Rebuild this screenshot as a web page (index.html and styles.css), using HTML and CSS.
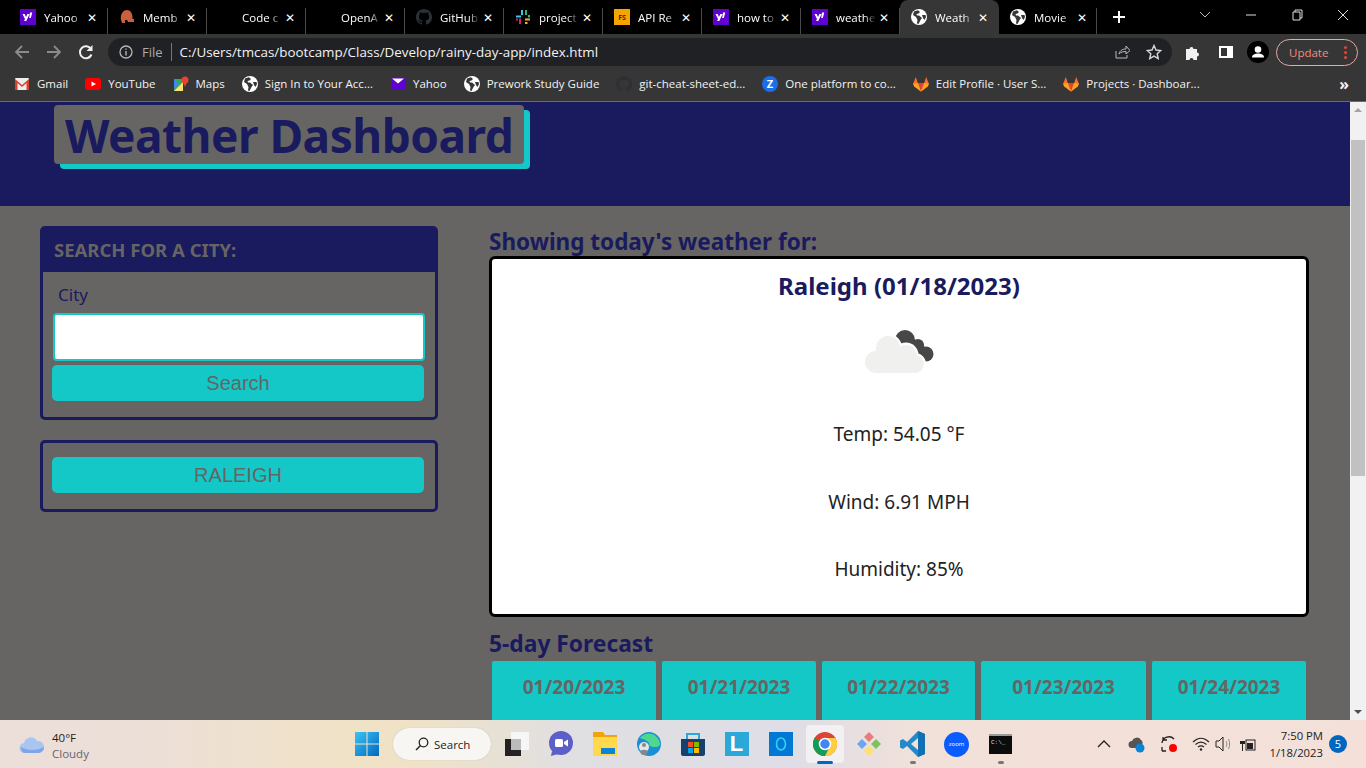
FILE: index.html
```html
<!DOCTYPE html>
<html lang="en">
<head>
    <meta charset="UTF-8">
    <meta name="viewport" content="width=device-width, initial-scale=1.0">
    <title>Weather Dashboard</title>
    <link rel="stylesheet" href="styles.css">
</head>
<body>
    <svg class="defs" width="0" height="0">
        <symbol id="globe" viewBox="0 0 16 16">
            <circle cx="8" cy="8" r="8" fill="#fff"/>
            <path d="M7 1.200 3 2.600 2 6l3 2 1.500 3-.5 3.500 1.500.5L9.500 11 11 9 8 6.500 6 6.500 5.500 5 7.500 4.500 9 3z" fill="#363636"/>
            <path d="M11 6h3.500l.5 2-1.500 3-1.500-2z" fill="#363636"/>
        </symbol>
        <symbol id="yahoo" viewBox="0 0 16 16">
            <rect width="16" height="16" fill="#5f01d1"/>
            <path d="M2.500 5h2.200L6 8l1.400-3h2.100L6.300 12H4.100l.9-2.100zM10 3.500h2.300L10.800 9H9.200z" fill="#fff"/>
        </symbol>
        <symbol id="github" viewBox="0 0 16 16">
            <path fill="#2b3137" d="M8 0C3.580 0 0 3.580 0 8c0 3.540 2.290 6.530 5.470 7.590.4.070.55-.17.55-.38 0-.19-.01-.82-.01-1.490-2.010.37-2.530-.49-2.690-.94-.09-.23-.48-.94-.82-1.130-.28-.15-.68-.52-.01-.53.63-.01 1.080.58 1.230.82.72 1.210 1.870.87 2.330.66.070-.52.28-.87.51-1.070-1.780-.2-3.640-.89-3.640-3.950 0-.87.31-1.590.82-2.150-.08-.2-.36-1.020.08-2.120 0 0 .67-.21 2.200.82.64-.18 1.320-.27 2-.27.68 0 1.360.09 2 .27 1.530-1.040 2.200-.82 2.200-.82.44 1.100.16 1.920.08 2.120.51.56.82 1.270.82 2.150 0 3.070-1.870 3.750-3.650 3.950.29.25.54.73.54 1.480 0 1.070-.01 1.930-.01 2.200 0 .21.15.46.55.38A8.013 8.013 0 0016 8c0-4.420-3.580-8-8-8z"/>
        </symbol>
        <symbol id="gitlab" viewBox="0 0 16 16">
            <path d="M8 15.500 1 10.200l-.8-2.700L2.800 1l2 6h6.400l2-6 2.600 6.500-.8 2.700z" fill="#fc6d26"/>
            <path d="M8 15.500 4.800 7h6.400z" fill="#e24329"/>
            <path d="M8 15.500 1 10.200l-.8-2.700L4.800 7zM8 15.500l7-5.300.8-2.700L11.200 7z" fill="#fca326"/>
        </symbol>
    </svg>

    <div class="tabstrip">
        <div class="tab"><svg class="favicon"><use href="#yahoo"/></svg><span class="tab-title">Yahoo</span><span class="tab-x">✕</span></div>
        <div class="tab"><svg class="favicon" viewBox="0 0 16 16"><path d="M2 11C1 4 5 1 8 1s6 3 5.500 9H15v3H9l-1-2H6v3H3z" fill="#c8603e"/></svg><span class="tab-title">Memb</span><span class="tab-x">✕</span></div>
        <div class="tab"><span class="favicon"></span><span class="tab-title">Code c</span><span class="tab-x">✕</span></div>
        <div class="tab"><span class="favicon"></span><span class="tab-title">OpenA</span><span class="tab-x">✕</span></div>
        <div class="tab"><svg class="favicon"><use href="#github"/></svg><span class="tab-title">GitHub</span><span class="tab-x">✕</span></div>
        <div class="tab"><svg class="favicon" viewBox="0 0 16 16"><path d="M1 6.500h5v2H1z" fill="#36c5f0"/><path d="M6 1h2v5H6z" fill="#36c5f0"/><path d="M10 1h2v5h-2zM13 6h2v2.500h-2z" fill="#2eb67d"/><path d="M10 9.500h5v2h-5zM10 13h2.500v2H10z" fill="#ecb22e"/><path d="M1 9.500h2v2H1zM4 9.500h2v5.500H4z" fill="#e01e5a"/></svg><span class="tab-title">project</span><span class="tab-x">✕</span></div>
        <div class="tab"><svg class="favicon" viewBox="0 0 16 16"><rect width="16" height="16" fill="#f5a400"/><text x="8" y="11" class="fs-mark">FS</text></svg><span class="tab-title">API Re</span><span class="tab-x">✕</span></div>
        <div class="tab"><svg class="favicon"><use href="#yahoo"/></svg><span class="tab-title">how to</span><span class="tab-x">✕</span></div>
        <div class="tab"><svg class="favicon"><use href="#yahoo"/></svg><span class="tab-title">weathe</span><span class="tab-x">✕</span></div>
        <div class="tab tab-active"><svg class="favicon"><use href="#globe"/></svg><span class="tab-title">Weath</span><span class="tab-x">✕</span></div>
        <div class="tab tab-last"><svg class="favicon"><use href="#globe"/></svg><span class="tab-title">Movie</span><span class="tab-x">✕</span></div>
        <svg class="new-tab" width="14" height="14" viewBox="0 0 14 14"><path d="M7 1v12M1 7h12" stroke="#fff" stroke-width="2"/></svg>
        <div class="window-btns">
            <svg width="46" height="14" viewBox="0 0 46 14"><path d="M18 4l5 5 5-5" fill="none" stroke="#bbb"/></svg>
            <svg width="46" height="14" viewBox="0 0 46 14"><path d="M18 7h10" stroke="#ddd"/></svg>
            <svg width="46" height="14" viewBox="0 0 46 14"><path d="M19 4h7v8h-7zM21 4V2h7v8h-2" fill="none" stroke="#ddd"/></svg>
            <svg width="46" height="14" viewBox="0 0 46 14"><path d="M18 2l10 10M28 2 18 12" stroke="#ddd"/></svg>
        </div>
    </div>

    <div class="toolbar">
        <svg class="nav-icon" viewBox="0 0 16 16"><path d="M15 8H2M8 2 2 8l6 6" fill="none" stroke="#8a8b8d" stroke-width="1.800"/></svg>
        <svg class="nav-icon" viewBox="0 0 16 16"><path d="M1 8h13M8 2l6 6-6 6" fill="none" stroke="#8a8b8d" stroke-width="1.800"/></svg>
        <svg class="nav-icon" viewBox="0 0 16 16"><path d="M13.500 10.500A6 6 0 1 1 13 5" fill="none" stroke="#f1f1f1" stroke-width="2"/><path d="M14.500 1v6h-6z" fill="#f1f1f1"/></svg>
        <div class="omnibox">
            <svg class="info-icon" viewBox="0 0 14 14"><circle cx="7" cy="7" r="6" fill="none" stroke="#b4b6b8" stroke-width="1.300"/><path d="M7 6v4.500M7 3.500v1.300" stroke="#b4b6b8" stroke-width="1.400"/></svg>
            <span class="scheme">File</span>
            <span class="url">C:/Users/tmcas/bootcamp/Class/Develop/rainy-day-app/index.html</span>
            <svg class="omni-icon" viewBox="0 0 16 16"><path d="M2 7v7h11v-3" fill="none" stroke="#b8babc"/><path d="M5 10c1-4 4-5 7-5V2l4 4.500L12 10V7.500C9 7.500 7 8 5 10z" fill="none" stroke="#b8babc"/></svg>
            <svg class="omni-icon star" viewBox="0 0 16 16"><path d="M8 1.500l2 4.500 4.800.5-3.600 3.200 1 4.800L8 12.100l-4.200 2.400 1-4.800L1.200 6.500 6 6z" fill="none" stroke="#d5d6d8" stroke-width="1.400"/></svg>
        </div>
        <svg class="tool-icon puzzle" viewBox="0 0 16 16"><path d="M1 5h3.500a2 2 0 1 1 4 0H12v3.500a2 2 0 1 1 0 4V16H8.500a2 2 0 1 0-4 0H1z" fill="#f1f1f1"/></svg>
        <svg class="tool-icon" viewBox="0 0 16 16"><path d="M1 2h14v12H1zM3 4v8h6V4z" fill="#fff" fill-rule="evenodd"/></svg>
        <svg class="avatar" viewBox="0 0 22 22"><circle cx="11" cy="11" r="11" fill="#000"/><circle cx="11" cy="8.500" r="3.300" fill="#fff"/><path d="M5 16.500c0-3 3-4 6-4s6 1 6 4z" fill="#fff"/></svg>
        <div class="update-pill"><span>Update</span><i class="kebab"></i></div>
    </div>

    <div class="bookmarks">
        <div class="bm"><svg class="bm-icon" viewBox="0 0 16 16"><rect x="1" y="2" width="14" height="12" rx="1" fill="#eee"/><path d="M1 3l7 6 7-6v11h-2.500V7L8 11 3.500 7v7H1z" fill="#d8402f"/></svg>Gmail</div>
        <div class="bm"><svg class="bm-icon" viewBox="0 0 16 16"><rect y="2" width="16" height="12" rx="3" fill="#f00"/><path d="M6.500 5.500v5L11 8z" fill="#fff"/></svg>YouTube</div>
        <div class="bm"><svg class="bm-icon" viewBox="0 0 16 16"><path d="M1 3h9v12H1z" fill="#34a853"/><path d="M1 15 10 6v9z" fill="#fbe26a"/><path d="M1 3l5 5-5 5z" fill="#4285f4"/><circle cx="12" cy="4" r="3.500" fill="#ea4335"/><path d="M10 6l2 5 2-5z" fill="#ea4335"/></svg>Maps</div>
        <div class="bm"><svg class="bm-icon"><use href="#globe"/></svg>Sign In to Your Acc...</div>
        <div class="bm"><svg class="bm-icon" viewBox="0 0 16 16"><path d="M1 2h14v12H1z" fill="#5f01d1"/><path d="M2 2.500h12L8 7.500z" fill="#fff"/></svg>Yahoo</div>
        <div class="bm"><svg class="bm-icon"><use href="#globe"/></svg>Prework Study Guide</div>
        <div class="bm"><svg class="bm-icon"><use href="#github"/></svg>git-cheat-sheet-ed...</div>
        <div class="bm"><svg class="bm-icon" viewBox="0 0 16 16"><circle cx="8" cy="8" r="8" fill="#1a6fe8"/><text x="8" y="12" class="z-mark">Z</text></svg>One platform to co...</div>
        <div class="bm"><svg class="bm-icon"><use href="#gitlab"/></svg>Edit Profile · User S...</div>
        <div class="bm"><svg class="bm-icon"><use href="#gitlab"/></svg>Projects · Dashboar...</div>
        <span class="bm-more">»</span>
    </div>

    <div class="viewport">
        <div class="page">
            <header class="banner">
                <h1 class="banner-title">Weather Dashboard</h1>
            </header>
            <div class="content">
                <aside class="sidebar">
                    <section class="panel">
                        <h2 class="panel-head">SEARCH FOR A CITY:</h2>
                        <label class="city-label" for="city">City</label>
                        <input class="city-input" type="text" id="city">
                        <button class="btn" type="button">Search</button>
                    </section>
                    <section class="panel history">
                        <button class="btn" type="button">RALEIGH</button>
                    </section>
                </aside>
                <main class="results">
                    <h3 class="section-title">Showing today's weather for:</h3>
                    <div class="today">
                        <h2 class="today-title">Raleigh (01/18/2023)</h2>
                        <svg class="today-icon" width="80" height="50" viewBox="-1 0 80 50">
                            <g fill="#474747">
                                <circle cx="45" cy="15" r="10"/>
                                <circle cx="58" cy="20" r="6"/>
                                <circle cx="66" cy="29" r="7.500"/>
                                <path d="M40 12 62 16 70 35 50 36z"/>
                            </g>
                            <g fill="#fff">
                                <circle cx="28" cy="23" r="14"/>
                                <circle cx="46" cy="30" r="12.500"/>
                                <circle cx="55" cy="39" r="11"/>
                            </g>
                            <g fill="#f0f0ef">
                                <circle cx="16" cy="37" r="11"/>
                                <circle cx="28" cy="23" r="12"/>
                                <circle cx="46" cy="31" r="11"/>
                                <circle cx="55" cy="39" r="9"/>
                                <path d="M16 30h39v18H16z"/>
                            </g>
                        </svg>
                        <p class="today-line first">Temp: 54.05 °F</p>
                        <p class="today-line">Wind: 6.91 MPH</p>
                        <p class="today-line">Humidity: 85%</p>
                    </div>
                    <h3 class="section-title forecast-title">5-day Forecast</h3>
                    <div class="forecast">
                        <div class="day">01/20/2023</div>
                        <div class="day">01/21/2023</div>
                        <div class="day">01/22/2023</div>
                        <div class="day">01/23/2023</div>
                        <div class="day">01/24/2023</div>
                    </div>
                </main>
            </div>
        </div>
        <div class="scrollbar">
            <svg class="scroll-arrow" width="16" height="16" viewBox="0 0 16 16"><path d="M4 10l4-4 4 4z" fill="#a3a3a3"/></svg>
            <div class="scroll-thumb"></div>
            <svg class="scroll-arrow bottom" width="16" height="16" viewBox="0 0 16 16"><path d="M4 6l4 4 4-4z" fill="#505050"/></svg>
        </div>
    </div>

    <footer class="taskbar">
        <div class="tb-weather">
            <svg width="26" height="20" viewBox="0 0 26 20"><path d="M6 19a5 5 0 0 1-1-10 7 7 0 0 1 13-2 6 6 0 0 1 2 12z" fill="#a9c5f2"/><path d="M2 13c6 4 16 4 23 0v2c-2 3-4 4-6 4H6c-2 0-4-2-4-6z" fill="#7fa5e6"/></svg>
            <div class="tb-weather-text"><span>40°F</span><span class="muted">Cloudy</span></div>
        </div>
        <svg class="win-logo" width="24" height="24" viewBox="0 0 24 24">
            <defs><linearGradient id="win" x1="0" y1="0" x2="1" y2="1"><stop offset="0" stop-color="#3bc4f4"/><stop offset="1" stop-color="#0067c0"/></linearGradient></defs>
            <path d="M0 0h11.500v11.500H0zM12.500 0H24v11.500H12.500zM0 12.500h11.500V24H0zM12.500 12.500H24V24H12.500z" fill="url(#win)"/>
        </svg>
        <div class="tb-search">
            <svg width="14" height="14" viewBox="0 0 14 14"><circle cx="8.500" cy="5.500" r="4.300" fill="none" stroke="#222" stroke-width="1.300"/><path d="M5.500 8.500 1 13" stroke="#222" stroke-width="1.500"/></svg>
            <span>Search</span>
        </div>
        <div class="tb-apps">
            <div class="slot"><svg width="24" height="24" viewBox="0 0 24 24"><rect x="6" y="0" width="18" height="18" fill="#f6f6f6"/><rect x="0" y="7" width="16" height="17" fill="#222"/><rect x="6" y="7" width="10" height="11" fill="#bbb"/></svg></div>
            <div class="slot"><svg width="24" height="26" viewBox="0 0 24 26"><circle cx="12" cy="12" r="12" fill="#5b5fc7"/><path d="M3 20l-1 5 7-2z" fill="#5b5fc7"/><rect x="6" y="8" width="8" height="8" rx="1.500" fill="#fff"/><path d="M15 11l4-2.500v7L15 13z" fill="#fff"/></svg></div>
            <div class="slot"><svg width="26" height="24" viewBox="0 0 26 24"><path d="M1 0h10l2 3h12v21H1z" fill="#f0a30a"/><path d="M1 5h24v19H1z" fill="#ffd84d"/><rect x="9" y="16" width="14" height="6" fill="#0a84d6"/></svg></div>
            <div class="slot"><svg width="24" height="24" viewBox="0 0 24 24"><circle cx="12" cy="12" r="12" fill="#1b8fd6"/><path d="M3 6c5-7 17-6 20 5 1 5-9 5-11 2 2-3-6-6-9-7z" fill="#4fd68f"/><circle cx="7" cy="15" r="5" fill="#e5e5e5"/><circle cx="7" cy="13" r="2" fill="#888"/><path d="M3 20c0-3 8-3 8 0l-2 3H5z" fill="#888"/></svg></div>
            <div class="slot"><svg width="24" height="24" viewBox="0 0 24 24"><path d="M0 7h24v15c0 1-1 2-2 2H2c-1 0-2-1-2-2z" fill="#17406d"/><path d="M6 7V2h12v5" fill="none" stroke="#2aa6e0" stroke-width="2"/><path d="M7 10h5v5H7z" fill="#f25022"/><path d="M13 10h5v5h-5z" fill="#7fba00"/><path d="M7 16h5v5H7z" fill="#00a4ef"/><path d="M13 16h5v5h-5z" fill="#ffb900"/></svg></div>
            <div class="slot"><div class="l-app">L</div></div>
            <div class="slot"><svg width="24" height="24" viewBox="0 0 24 24"><rect width="24" height="24" fill="#0078d4"/><ellipse cx="12" cy="12" rx="4.500" ry="6" fill="none" stroke="#34d1f5" stroke-width="1.600"/></svg></div>
            <div class="slot slot-on"><svg width="24" height="24" viewBox="0 0 24 24"><circle cx="12" cy="12" r="12" fill="#db4437"/><path d="M12 12 1.600 6A12 12 0 0 0 12 24l6-12z" fill="#0f9d58"/><path d="M12 24A12 12 0 0 0 22.400 6H12l6 6z" fill="#ffcd40"/><circle cx="12" cy="12" r="5.500" fill="#4285f4" stroke="#fff" stroke-width="1.500"/></svg><i class="run-bar"></i></div>
            <div class="slot"><svg width="24" height="24" viewBox="0 0 24 24"><path d="M12 0l5 5-5 5-5-5z" fill="#e87c7c"/><path d="M5 7l5 5-5 5-5-5z" fill="#6aa7f0"/><path d="M19 7l5 5-5 5-5-5z" fill="#7cc35b"/><path d="M12 14l5 5-5 5-5-5z" fill="#ffe16b"/></svg></div>
            <div class="slot"><svg width="25" height="26" viewBox="0 0 25 26"><path d="M18 0l7 3v20l-7 3L7 15l-4 3-3-1.500v-7L3 8l4 3z" fill="#2489ca"/><path d="M18 0l7 3v20l-7 3z" fill="#1070b3"/><path d="M18 7 11 13l7 6z" fill="#f3e0d8"/></svg><i class="run-dot"></i></div>
            <div class="slot"><div class="zoom-app">zoom</div></div>
            <div class="slot"><div class="cmd-app">C:\_</div><i class="run-dot"></i></div>
        </div>
        <div class="tray">
            <svg class="tray-i" width="14" height="8" viewBox="0 0 14 8"><path d="M1 7l6-6 6 6" fill="none" stroke="#222" stroke-width="1.300"/></svg>
            <svg class="tray-i gap-l" width="18" height="18" viewBox="0 0 18 18"><path d="M4 13a3.500 3.500 0 0 1 0-7 5 5 0 0 1 9-1 4 4 0 0 1 1 5H9v3z" fill="#555"/><circle cx="12" cy="13" r="4.500" fill="#0a84d6"/></svg>
            <svg class="tray-i gap-m" width="18" height="18" viewBox="0 0 18 18"><path d="M2 8a7 7 0 0 1 12-4M3 2v3h4M2 12v4M2 16h4" fill="none" stroke="#222" stroke-width="1.300"/><circle cx="13" cy="13" r="4" fill="#f00"/></svg>
            <svg class="tray-i gap-m" width="18" height="14" viewBox="0 0 18 14"><path d="M1 5c5-5 11-5 16 0M3.500 7.500c3.500-3 7.500-3 11 0M6 10c2-1.500 4-1.500 6 0" fill="none" stroke="#222" stroke-width="1.200"/><circle cx="9" cy="12.500" r="1.200" fill="#222"/></svg>
            <svg class="tray-i gap-s" width="16" height="16" viewBox="0 0 16 16"><path d="M1 5h3l4-4v14l-4-4H1z" fill="none" stroke="#222"/><path d="M11 5c1 2 1 4 0 6M13.500 3c1.500 3 1.500 7 0 10" fill="none" stroke="#888"/></svg>
            <svg class="tray-i gap-b" width="16" height="16" viewBox="0 0 16 16"><path d="M1 1v4M4 1v4M0 5h5v3H3v7H2V8H0z" fill="#222"/><rect x="6" y="4" width="9" height="10" fill="none" stroke="#222"/><rect x="7" y="7" width="6" height="6" fill="#222"/></svg>
            <div class="clock"><span>7:50 PM</span><span>1/18/2023</span></div>
            <div class="notif">5</div>
        </div>
    </footer>
</body>
</html>
```

FILE: styles.css
```css
* {
    box-sizing: border-box;
}
html, body {
    height: 100%;
}
body {
    margin: 0;
    height: 768px;
    overflow: hidden;
    display: flex;
    flex-direction: column;
    font-family: "Noto Sans", sans-serif;
    background-color: #000;
}
.defs {
    position: absolute;
}

/* browser chrome */
.tabstrip {
    height: 34px;
    flex: none;
    display: flex;
    padding-left: 9px;
    background-color: #000;
    color: #fff;
}
.tab {
    width: 99px;
    height: 34px;
    display: flex;
    align-items: center;
    padding-left: 11px;
    font-family: "Open Sans", sans-serif;
    font-size: 11.500px;
    position: relative;
    border-right: 1px solid #4a4a4a;
    background-clip: padding-box;
}
.tab::after {
    content: "";
    position: absolute;
    right: -1px;
    top: 0;
    width: 1px;
    height: 8px;
    background-color: #000;
}
.tab-active {
    background-color: #363636;
    border-right: none;
    border-radius: 8px 8px 0 0;
}
.tab-last {
    width: 98px;
}
.favicon {
    width: 16px;
    height: 16px;
    flex: none;
    display: block;
}
.tab-title {
    width: 40px;
    margin-left: 8px;
    overflow: hidden;
    white-space: nowrap;
    -webkit-mask-image: linear-gradient(to right, #000 70%, transparent 100%);
    mask-image: linear-gradient(to right, #000 70%, transparent 100%);
}
.tab-x {
    width: 16px;
    text-align: center;
    font-size: 12px;
}
.fs-mark {
    font-size: 7px;
    font-weight: bold;
    text-anchor: middle;
    fill: #4a2c00;
}
.z-mark {
    font-size: 11px;
    font-weight: bold;
    text-anchor: middle;
    fill: #fff;
}
.new-tab {
    align-self: center;
    margin-left: 15px;
}
.window-btns {
    margin-left: auto;
    display: flex;
    align-items: center;
    height: 30px;
}
.toolbar {
    height: 34px;
    flex: none;
    display: flex;
    align-items: center;
    padding: 2px 0 0 14px;
    background-color: #363636;
}
.nav-icon {
    width: 16px;
    height: 16px;
    margin-right: 16px;
    flex: none;
}
.omnibox {
    width: 1064px;
    height: 28px;
    margin-left: -2px;
    display: flex;
    align-items: center;
    padding-left: 11px;
    border-radius: 14px;
    background-color: #202124;
    font-family: "Open Sans", sans-serif;
    font-size: 13px;
    flex: none;
}
.info-icon {
    width: 14px;
    height: 14px;
    flex: none;
}
.scheme {
    margin-left: 9px;
    padding-right: 8px;
    border-right: 1px solid #70757a;
    color: #a9abad;
    line-height: 18px;
}
.url {
    margin-left: 8px;
    color: #f1f3f4;
    font-size: 13.400px;
    white-space: nowrap;
}
.omni-icon {
    width: 16px;
    height: 16px;
    margin-left: auto;
    margin-right: 16px;
    flex: none;
}
.omni-icon.star {
    margin-left: 0;
    margin-right: 10px;
}
.tool-icon {
    width: 16px;
    height: 16px;
    flex: none;
    margin-left: 17px;
}
.puzzle {
    margin-left: 13px;
}
.avatar {
    width: 22px;
    height: 22px;
    flex: none;
    margin-left: 13px;
}
.update-pill {
    width: 82px;
    height: 27px;
    margin-left: 7px;
    padding-left: 12px;
    flex: none;
    display: flex;
    align-items: center;
    border: 1px solid #e8a99f;
    border-radius: 14px;
    color: #f28b82;
    font-family: "Open Sans", sans-serif;
    font-size: 11.500px;
}
.kebab {
    width: 3px;
    height: 3px;
    margin-left: 16px;
    border-radius: 50%;
    background-color: #ea4335;
    box-shadow: 0 -5px 0 #ea4335, 0 5px 0 #ea4335;
}
.bookmarks {
    height: 34px;
    flex: none;
    display: flex;
    align-items: center;
    padding: 0 0 2px 14px;
    gap: 17px;
    background-color: #363636;
    border-bottom: 1px solid #6a6a6a;
    color: #f1f3f4;
    font-family: "Open Sans", sans-serif;
    font-size: 11.500px;
    white-space: nowrap;
}
.bm {
    display: flex;
    align-items: center;
    gap: 7px;
}
.bm-icon {
    width: 16px;
    height: 16px;
    flex: none;
}
.bm-more {
    margin-left: auto;
    margin-right: 17px;
    font-size: 16px;
    font-weight: bold;
}

/* page */
.viewport {
    flex: 1;
    min-height: 0;
    display: flex;
    background-color: #666563;
    overflow: hidden;
}
.page {
    flex: 1;
    min-width: 0;
}
.banner {
    height: 104px;
    padding: 3px 0 0 54px;
    background-color: #1a1a5e;
}
.banner-title {
    width: 470px;
    height: 59px;
    margin: 0;
    padding-left: 11px;
    background-color: #666563;
    border-radius: 4px;
    box-shadow: 6px 5px 0 #15c8c8;
    color: #1a1a5e;
    font-size: 46px;
    font-weight: 700;
    letter-spacing: -0.5px;
    line-height: 61px;
    white-space: nowrap;
}
.content {
    display: grid;
    grid-template-columns: 398px 820px;
    column-gap: 51px;
    padding: 20px 0 0 40px;
}
.panel {
    height: 194px;
    padding: 0 10px;
    border: 3px solid #1a1a5e;
    border-radius: 5px;
}
.panel-head {
    height: 43px;
    margin: 0 -10px;
    padding-left: 11px;
    background-color: #1a1a5e;
    color: #666563;
    font-size: 18.500px;
    font-weight: 700;
    line-height: 42px;
}
.city-label {
    display: block;
    height: 41px;
    padding-left: 5px;
    color: #1a1a5e;
    font-size: 17px;
    line-height: 46px;
}
.city-input {
    display: block;
    width: 372px;
    height: 48px;
    border: 2px solid #15c8c8;
    border-radius: 4px;
    background-color: #fff;
}
.btn {
    display: block;
    width: 372px;
    height: 36px;
    margin: 4px 0 0 -1px;
    padding: 0;
    border: none;
    border-radius: 5px;
    background-color: #15c8c8;
    color: #666563;
    font-family: "Liberation Sans", sans-serif;
    font-size: 20px;
}
.history {
    height: 72px;
    margin-top: 20px;
    padding-top: 10px;
}
.section-title {
    margin: 0;
    height: 30px;
    color: #1a1a5e;
    font-size: 22.500px;
    font-weight: 700;
    line-height: 31px;
}
.today {
    height: 361px;
    padding-top: 11px;
    border: 3px solid #000;
    border-radius: 6px;
    background-color: #fff;
    text-align: center;
}
.today-title {
    margin: 0;
    color: #1a1a5e;
    font-size: 24px;
    font-weight: 700;
    line-height: 32px;
}
.today-icon {
    display: block;
    margin: 23px auto 0;
}
.today-line {
    height: 67.500px;
    margin: 0;
    color: #222;
    font-size: 19px;
    line-height: 26px;
}
.today-line.first {
    margin-top: 46px;
}
.forecast-title {
    height: 31px;
    margin-top: 12px;
    font-size: 22.800px;
    line-height: 29px;
}
.forecast {
    display: grid;
    grid-template-columns: 164px 154px 153px 165px 154px;
    column-gap: 6px;
    padding-left: 3px;
    margin-top: 1px;
}
.day {
    height: 120px;
    padding-top: 13px;
    border-radius: 2px;
    background-color: #15c8c8;
    color: #666563;
    font-size: 19px;
    font-weight: 700;
    line-height: 26px;
    text-align: center;
}
.scrollbar {
    width: 16px;
    flex: none;
    display: flex;
    flex-direction: column;
    background-color: #f1f1f1;
}
.scroll-arrow {
    flex: none;
    display: block;
}
.scroll-thumb {
    height: 336px;
    margin: 22px 1px 0;
    background-color: #c1c1c1;
}
.scroll-arrow.bottom {
    margin-top: auto;
}

/* windows taskbar */
.taskbar {
    height: 48px;
    flex: none;
    display: flex;
    align-items: center;
    background: linear-gradient(to right, #ecdfdb 0, #ecdfd8 10%, #f0e2c8 24%, #f0e2c6 30%, #e0dfe2 42%, #dfdde6 58%, #f2e1d9 68%, #f4e0d8 100%);
    color: #222;
    font-family: "Open Sans", sans-serif;
}
.tb-weather {
    width: 355px;
    flex: none;
    padding-left: 19px;
    display: flex;
    align-items: center;
    gap: 7px;
    font-size: 11.500px;
    line-height: 15.500px;
}
.tb-weather-text {
    display: flex;
    flex-direction: column;
    padding-top: 3px;
}
.muted {
    color: #666;
}
.win-logo {
    flex: none;
}
.tb-search {
    width: 98px;
    height: 32px;
    margin-left: 14px;
    flex: none;
    display: flex;
    align-items: center;
    gap: 5px;
    padding-left: 22px;
    border-radius: 16px;
    background-color: #f7f6f3;
    box-shadow: 0 0 1px #aaa;
    font-size: 11.500px;
}
.tb-apps {
    display: flex;
    margin-left: 3.500px;
}
.slot {
    width: 44px;
    height: 48px;
    display: flex;
    align-items: center;
    justify-content: center;
    position: relative;
}
.slot-on::before {
    content: "";
    position: absolute;
    left: 3px;
    right: 3px;
    top: 5px;
    bottom: 5px;
    border-radius: 4px;
    background-color: rgba(255, 255, 255, 0.55);
}
.slot-on svg {
    position: relative;
}
.run-bar {
    position: absolute;
    left: 14px;
    bottom: 4px;
    width: 16px;
    height: 3px;
    border-radius: 2px;
    background-color: #0067c0;
}
.run-dot {
    position: absolute;
    left: 19px;
    bottom: 4px;
    width: 6px;
    height: 3px;
    border-radius: 2px;
    background-color: #777;
}
.l-app {
    width: 24px;
    height: 24px;
    background-color: #2aa8d8;
    color: #fff;
    font-family: "Liberation Sans", sans-serif;
    font-size: 22px;
    font-weight: bold;
    line-height: 24px;
    text-align: center;
}
.zoom-app {
    width: 25px;
    height: 25px;
    border-radius: 50%;
    background-color: #0b5cff;
    color: #fff;
    font-size: 6px;
    line-height: 25px;
    text-align: center;
}
.cmd-app {
    width: 23px;
    height: 20px;
    padding: 3px 0 0 2px;
    border-top: 2px solid #999;
    background-color: #0c0c0c;
    color: #ddd;
    font-family: "Liberation Mono", monospace;
    font-size: 6px;
    line-height: 8px;
}
.tray {
    margin-left: auto;
    padding-right: 19px;
    display: flex;
    align-items: center;
    font-size: 11.300px;
}
.tray-i {
    flex: none;
}
.gap-l {
    margin-left: 17px;
}
.gap-m {
    margin-left: 14px;
}
.gap-s {
    margin-left: 5px;
}
.gap-b {
    margin-left: 9px;
}
.clock {
    width: 67px;
    display: flex;
    flex-direction: column;
    align-items: flex-end;
    line-height: 17px;
}
.notif {
    width: 18px;
    height: 18px;
    margin-left: 6px;
    border-radius: 50%;
    background-color: #0067c0;
    color: #fff;
    font-size: 11px;
    line-height: 18px;
    text-align: center;
}
```
